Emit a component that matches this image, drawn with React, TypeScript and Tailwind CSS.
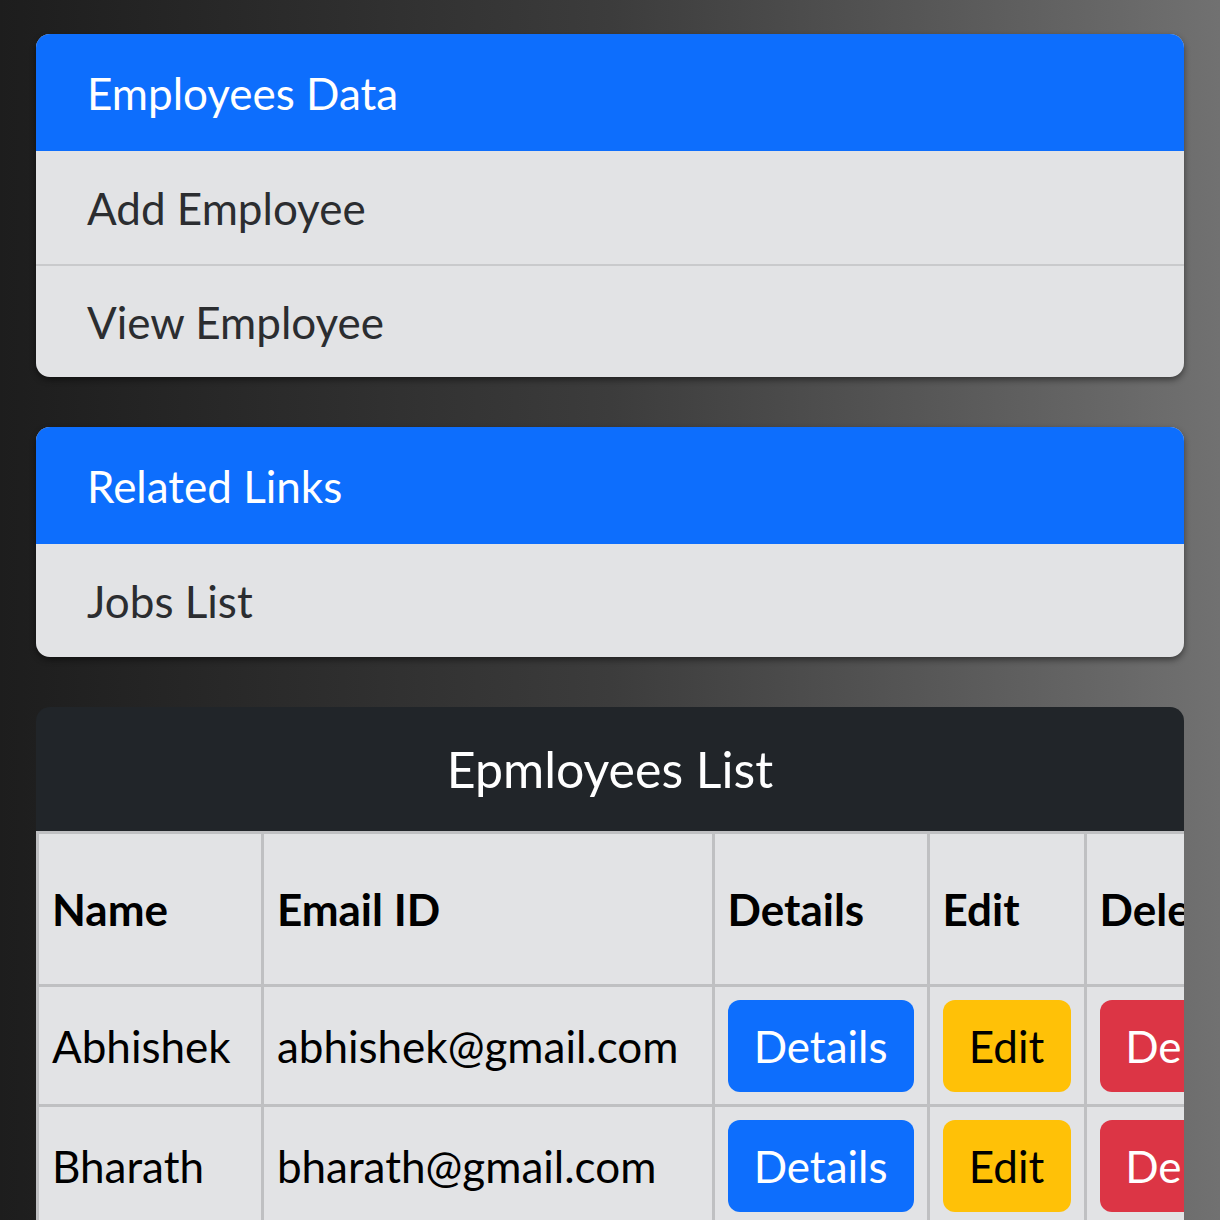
import React from 'react';

const font = { fontFamily: 'Lato, "Open Sans", sans-serif' };

const employees = [
  { name: 'Abhishek', email: 'abhishek@gmail.com' },
  { name: 'Bharath', email: 'bharath@gmail.com' },
  { name: 'Chetan', email: 'chetan@gmail.com' },
];

const LinkCard: React.FC<{ title: string; items: string[] }> = ({ title, items }) => (
  <div className="rounded-[14px] overflow-hidden shadow-[0_3px_6px_rgba(0,0,0,0.45)] bg-[#e2e3e5]">
    <div className="h-[117px] bg-[#0d6efd] flex items-center pl-[51px] text-white text-[44px]">{title}</div>
    {items.map((item, i) => (
      <div
        key={item}
        className={`h-[113px] flex items-center pl-[51px] text-[44px] text-[#2b2d30] ${i > 0 ? 'border-t-2 border-[#c9cacc]' : ''}`}
      >
        {item}
      </div>
    ))}
  </div>
);

const App: React.FC = () => {
  return (
    <div
      className="h-[1220px] overflow-hidden bg-gradient-to-r from-[#1d1d1d] via-[#3c3c3c] to-[#717171] px-9 pt-[34px]"
      style={font}
    >
      <div className="flex flex-col gap-[50px]">
        <LinkCard title="Employees Data" items={['Add Employee', 'View Employee']} />
        <LinkCard title="Related Links" items={['Jobs List']} />

        <div className="rounded-t-[14px] overflow-hidden">
          <div className="h-[124px] bg-[#212529] flex items-center justify-center text-white text-[50px]">
            Epmloyees List
          </div>
          <div className="overflow-hidden bg-[#e2e3e5]">
            <table className="border-collapse text-black text-[44px] w-[1300px]">
              <colgroup>
                <col className="w-[226px]" />
                <col className="w-[452px]" />
                <col className="w-[214px]" />
                <col className="w-[156px]" />
                <col className="w-[252px]" />
              </colgroup>
              <thead>
                <tr className="h-[153px]">
                  {['Name', 'Email ID', 'Details', 'Edit', 'Delete'].map((h) => (
                    <th key={h} className="border-[3px] border-[#bfc0c2] text-left font-bold px-[13px]">
                      {h}
                    </th>
                  ))}
                </tr>
              </thead>
              <tbody>
                {employees.map((e) => (
                  <tr key={e.name} className="h-[120px]">
                    <td className="border-[3px] border-[#bfc0c2] px-[13px]">{e.name}</td>
                    <td className="border-[3px] border-[#bfc0c2] px-[13px]">{e.email}</td>
                    <td className="border-[3px] border-[#bfc0c2] px-[13px]">
                      <button className="h-[92px] w-[186px] rounded-[12px] bg-[#0d6efd] text-white">Details</button>
                    </td>
                    <td className="border-[3px] border-[#bfc0c2] px-[13px]">
                      <button className="h-[92px] w-[128px] rounded-[12px] bg-[#ffc107] text-black">Edit</button>
                    </td>
                    <td className="border-[3px] border-[#bfc0c2] px-[13px]">
                      <button className="h-[92px] w-[180px] rounded-[12px] bg-[#dc3545] text-white">Delete</button>
                    </td>
                  </tr>
                ))}
              </tbody>
            </table>
          </div>
        </div>
      </div>
    </div>
  );
};

export default App;
